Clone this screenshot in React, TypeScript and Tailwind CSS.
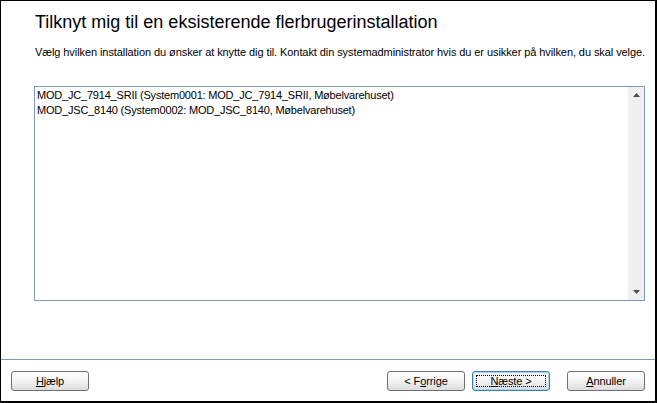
import type { ReactNode } from 'react';

const items = [
  'MOD_JC_7914_SRII (System0001: MOD_JC_7914_SRII, Møbelvarehuset)',
  'MOD_JSC_8140 (System0002: MOD_JSC_8140, Møbelvarehuset)',
];

// ── Classic wizard button ────────────────────────────────────────────────────

function WizButton({ children, focused = false }: { children: ReactNode; focused?: boolean }): JSX.Element {
  return (
    <button
      type="button"
      className={`relative flex h-[20px] w-[78px] items-center justify-center rounded-[3px] border bg-gradient-to-b from-[#ffffff] via-[#f3f3f3] to-[#dcdcdc] text-[11px] leading-[13px] tracking-[-0.1px] text-black ${
        focused ? 'border-[#3c7fb1] shadow-[inset_0_0_0_1px_#a9dbf6]' : 'border-[#707070]'
      }`}
    >
      {focused && (
        <span className="pointer-events-none absolute inset-[3px] border border-dotted border-black" />
      )}
      <span className="relative">{children}</span>
    </button>
  );
}

function ScrollArrow({ up }: { up: boolean }): JSX.Element {
  return (
    <div className="flex h-[16px] items-center justify-center">
      <svg width="7" height="4" viewBox="0 0 7 4">
        {up ? <path d="M3.5 0 L7 4 L0 4 Z" fill="#4d4d4d" /> : <path d="M0 0 L7 0 L3.5 4 Z" fill="#4d4d4d" />}
      </svg>
    </div>
  );
}

export default function App(): JSX.Element {
  return (
    <div className="flex h-[403px] w-[657px] flex-col border-t border-l border-r-2 border-b-2 border-black bg-white font-['Liberation_Sans',Arial,sans-serif] text-black">
      <div className="px-[34px] pt-[10px]">
        <h1 className="text-[18px] leading-[22px]">Tilknyt mig til en eksisterende flerbrugerinstallation</h1>
        <p className="mt-[13px] whitespace-nowrap text-[11px] leading-[13px] tracking-[-0.08px]">
          Vælg hvilken installation du ønsker at knytte dig til. Kontakt din systemadministrator hvis du er usikker på hvilken, du skal velge.
        </p>
      </div>

      <div className="ml-[33px] mt-[27px] flex h-[215px] w-[611px] border border-[#7f9db9] bg-white">
        <ul className="flex-1 pl-[2px] pt-[1px]">
          {items.map((item) => (
            <li key={item} className="whitespace-nowrap text-[11px] leading-[15px] tracking-[-0.2px]">
              {item}
            </li>
          ))}
        </ul>
        <div className="flex w-[16px] flex-col justify-between bg-[#f0f0f0]">
          <ScrollArrow up />
          <ScrollArrow up={false} />
        </div>
      </div>

      <div className="flex-1" />

      <div className="border-t border-[#7f9db9]" />
      <div className="flex h-[41px] items-start px-[10px] pt-[11px]">
        <WizButton>
          <span className="underline">H</span>jælp
        </WizButton>
        <div className="ml-auto flex">
          <WizButton>
            &lt; F<span className="underline">o</span>rrige
          </WizButton>
          <div className="ml-[7px]">
            <WizButton focused>
              <span className="underline">N</span>æste &gt;
            </WizButton>
          </div>
          <div className="ml-[17px]">
            <WizButton>
              <span className="underline">A</span>nnuller
            </WizButton>
          </div>
        </div>
      </div>
    </div>
  );
}
